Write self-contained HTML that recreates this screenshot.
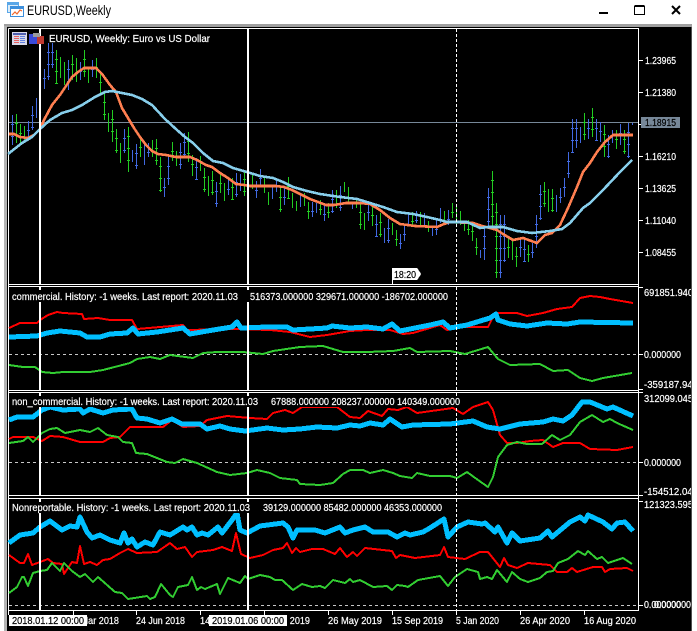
<!DOCTYPE html>
<html><head><meta charset="utf-8"><title>EURUSD,Weekly</title>
<style>
html,body{margin:0;padding:0;background:#fff;width:697px;height:631px;overflow:hidden}
svg{display:block}
text{font-family:"Liberation Sans",sans-serif;font-size:10px;fill:#fff;stroke:#fff;stroke-width:.2}
text.k{fill:#000;stroke:#000}
</style></head><body>
<svg width="697" height="631" viewBox="0 0 697 631" xmlns="http://www.w3.org/2000/svg">
<defs><clipPath id="c"><rect x="7" y="27" width="684" height="604"/></clipPath></defs>
<rect width="697" height="631" fill="#fff"/>
<rect x="4" y="24" width="688" height="607" fill="#a0a0a0"/>
<rect x="4" y="26" width="3" height="605" fill="#b4b4b4"/>
<rect x="7" y="27" width="684.5" height="604" fill="#000"/>

<!-- title bar -->
<g shape-rendering="crispEdges">
<rect x="7" y="2" width="12" height="11" fill="#5aa7e8"/><rect x="8" y="5" width="10" height="7" fill="#dcecf8"/>
<rect x="10" y="6" width="14" height="11" fill="#3d8fdc"/><rect x="11" y="9" width="12" height="7" fill="#fff"/>
</g>
<path d="M12 15l3-3 2 2 3-4 2 1" fill="none" stroke="#f0662a" stroke-width="1.2"/>
<text class="k" x="27" y="15" textLength="84" lengthAdjust="spacingAndGlyphs" style="font-size:14px;stroke-width:0">EURUSD,Weekly</text>
<g shape-rendering="crispEdges" fill="#000">
<rect x="599" y="12" width="9" height="2"/>
<path fill="none" stroke="#000" d="M634.500 6.500H644.500V14.500H634.500ZM634.500 5.500H644.500"/>
</g>
<path d="M672 6l8 8M680 6l-8 8" stroke="#000" stroke-width="2" fill="none"/>

<!-- frames -->
<g stroke="#fff" stroke-width="1" fill="none" shape-rendering="crispEdges">
<path d="M8.500 28.500H638.500V610.500M8.500 28.500V610.500"/>
<path d="M8 284.500H639M8 286.500H639M8 390.500H639M8 392.500H639M8 495.500H639M8 498.500H639M8 610.500H639"/>
<path d="M638 60.500h5M638 92.500h5M638 124.500h3M638 156.500h5M638 188.500h5M638 220.500h5M638 252.500h5M638 287.500h5M638 354.500h5M638 389.500h5M638 392.500h5M638 462.500h5M638 495.500h5M638 501.500h5M638 605.500h5"/>
<path d="M8.500 610v5M73.500 610v5M136.500 610v5M200.500 610v5M264.500 610v5M328.500 610v5M392.500 610v5M456.500 610v5M520.500 610v5M584.500 610v5"/>
</g>
<path d="M9 122.500H638" stroke="#778899" shape-rendering="crispEdges"/>
<g stroke="#c8c8c8" stroke-dasharray="3 3" shape-rendering="crispEdges">
<path d="M9 354.500H638M9 462.500H638M9 605.500H638"/>
</g>

<!-- bars -->
<g fill="none" shape-rendering="crispEdges">
<path id="bb" stroke="#4169e1" stroke-width="1" d="M12.500 115V145M28.500 121V137M32.500 106V130M36.500 98V118M44.500 69V89M48.500 43V80M52.500 43V68M68.500 60V90M80.500 62V80M92.500 60V77M124.500 129V153M132.500 150V162M136.500 144V169M144.500 145V165M148.500 143V157M164.500 178V197M168.500 157V185M180.500 143V169M184.500 133V157M196.500 158V180M216.500 182V207M228.500 180V195M236.500 173V197M240.500 174V191M256.500 181V198M260.500 169V185M272.500 187V199M276.500 180V192M284.500 188V205M300.500 195V207M312.500 202V217M316.500 203V213M324.500 205V221M332.500 190V213M340.500 186V211M352.500 202V209M368.500 203V221M376.500 215V237M384.500 228V243M388.500 219V243M400.500 234V249M404.500 225V241M408.500 212V225M416.500 211V223M424.500 213V226M432.500 227V236M436.500 220V235M440.500 208V223M448.500 210V225M480.500 250V258M484.500 227V260M488.500 188V228M500.500 215V278M504.500 215V262M520.500 238V257M524.500 240V262M532.500 243V258M536.500 215V248M540.500 185V220M556.500 195V212M560.500 188V203M564.500 178V197M568.500 152V178M572.500 119V153M576.500 119V148M580.500 127V143M588.500 119V139M596.500 119V141M600.500 122V142M608.500 135V158M612.500 130V143M620.500 124V145M628.500 123V158M632.500 123V125"/>
<path id="bg" stroke="#22cc22" stroke-width="1" d="M16.500 114V143M20.500 124V143M24.500 126V143M56.500 50V84M60.500 57V78M64.500 62V85M72.500 55V80M76.500 58V82M84.500 50V77M88.500 68V83M96.500 58V78M100.500 73V93M104.500 93V120M108.500 113V132M112.500 110V142M116.500 129V153M120.500 143V163M128.500 127V172M140.500 138V157M152.500 140V157M156.500 139V165M160.500 157V192M172.500 142V161M176.500 151V166M188.500 132V162M192.500 155V176M200.500 156V171M204.500 168V192M208.500 176V196M212.500 171V195M220.500 174V193M224.500 183V201M232.500 178V200M244.500 170V196M252.500 175V189M264.500 177V193M268.500 192V205M280.500 188V212M288.500 177V199M292.500 193V208M296.500 201V211M304.500 193V206M308.500 202V219M320.500 200V215M328.500 203V218M336.500 190V208M344.500 182V192M348.500 187V203M356.500 200V208M360.500 203V229M364.500 213V230M372.500 206V226M380.500 213V237M392.500 223V235M396.500 230V246M412.500 212V225M420.500 212V225M428.500 221V232M444.500 211V223M452.500 203V218M456.500 205V225M460.500 211V225M464.500 222V231M468.500 220V235M472.500 222V241M476.500 238V255M492.500 171V228M496.500 203V278M508.500 238V258M512.500 238V260M516.500 247V267M528.500 245V262M544.500 182V207M548.500 189V212M552.500 189V212M584.500 113V140M592.500 108V137M604.500 125V157M616.500 130V149M624.500 130V154"/>
<path stroke="#4169e1" stroke-width="3" stroke-dasharray="1 11" stroke-dashoffset="-9" d="M12.500 115V145M28.500 121V137M32.500 106V130M44.500 69V89M48.500 43V80M52.500 43V68M68.500 60V90M80.500 62V80M92.500 60V77M124.500 129V153M136.500 144V169M148.500 143V157M164.500 178V197M168.500 157V185M180.500 143V169M184.500 133V157M196.500 158V180M216.500 182V207M228.500 180V195M236.500 173V197M256.500 181V198M260.500 169V185M284.500 188V205M312.500 202V217M324.500 205V221M332.500 190V213M340.500 186V211M368.500 203V221M376.500 215V237M388.500 219V243M400.500 234V249M404.500 225V241M416.500 211V223M436.500 220V235M448.500 210V225M484.500 227V260M488.500 188V228M500.500 215V278M504.500 215V262M520.500 238V257M524.500 240V262M532.500 243V258M536.500 215V248M540.500 185V220M560.500 188V203M564.500 178V197M568.500 152V178M572.500 119V153M576.500 119V148M588.500 119V139M596.500 119V141M600.500 122V142M608.500 135V158M620.500 124V145M628.500 123V158"/>
<path stroke="#22cc22" stroke-width="3" stroke-dasharray="1 11" stroke-dashoffset="-9" d="M16.500 114V143M20.500 124V143M56.500 50V84M72.500 55V80M84.500 50V77M96.500 58V78M100.500 73V93M104.500 93V120M112.500 110V142M116.500 129V153M128.500 127V172M140.500 138V157M156.500 139V165M160.500 157V192M172.500 142V161M188.500 132V162M192.500 155V176M204.500 168V192M212.500 171V195M220.500 174V193M232.500 178V200M244.500 170V196M264.500 177V193M280.500 188V212M288.500 177V199M308.500 202V219M320.500 200V215M328.500 203V218M360.500 203V229M372.500 206V226M380.500 213V237M396.500 230V246M412.500 212V225M452.500 203V218M468.500 220V235M472.500 222V241M476.500 238V255M492.500 171V228M496.500 203V278M508.500 238V258M516.500 247V267M528.500 245V262M544.500 182V207M552.500 189V212M584.500 113V140M592.500 108V137M604.500 125V157M616.500 130V149M624.500 130V154"/>
</g>

<!-- moving averages -->
<g fill="none" stroke-width="2.600" stroke-linejoin="round" shape-rendering="crispEdges">
<polyline stroke="#ff7f50" points="9,134 14,134 20,137 28,138 34,135 40,129 44,120 52,105 60,95 68,83 72,77 78,72 84,68 92,68 96,68 102,74 110,85 116,92 122,108 128,118 134,128 140,137 146,145 152,151 158,154 166,155 176,157 190,157 197,160 206,165 212,167 220,173 228,178 236,184 244,185 250,186 276,186 284,187 292,190 300,194 310,199 318,202 326,205 334,205 340,204 346,203 360,203 370,204 380,210 390,218 400,224 415,226 437,227 444,224 450,222 473,223 482,226 490,228 497,230 503,234 513,240 523,238 537,243 545,235 552,233 560,225 568,208 577,187 583,172 590,163 597,152 605,142 613,135 633,135"/>
<polyline stroke="#87ceeb" points="8,154 22,143 32,137 40,129 50,120 62,113 72,110 82,105 95,97 105,92 112,91 122,93 132,95 142,99 152,105 165,119 177,130 185,137 193,143 203,153 213,161 223,163 233,168 247,172 260,176 273,178 283,182 293,187 307,191 320,194 340,197 357,199 370,203 383,207 397,212 413,214 427,217 440,220 447,222 467,222 480,228 488,227 503,227 517,231 532,233 550,231 562,229 570,223 583,208 590,203 603,190 620,172 632,160"/>
</g>

<!-- panel 2 -->
<g fill="none" stroke-linejoin="round" shape-rendering="crispEdges">
<polyline stroke="#f00" stroke-width="2" points="9,328 20,323 37,323 40,320 48,315 57,312 63,313 82,314 84,319 98,318 110,320 132,320 137,329 160,327 183,325 187,330 233,329 270,330 290,332 310,337 327,335 350,331 367,330 390,330 403,334 413,333 440,325 447,330 463,327 488,327 495,313 517,313 527,316 543,313 557,309 572,307 580,298 590,296 600,297 610,299 633,303"/>
<polyline stroke="#32cd32" stroke-width="2" points="9,365 23,367 35,367 42,372 53,373 63,372 90,372 103,370 130,363 137,359 150,357 160,359 170,355 193,358 203,353 217,352 243,352 263,354 273,351 300,347 323,346 343,352 367,352 393,351 410,348 417,352 450,351 465,354 488,347 498,359 510,365 540,364 553,371 568,370 580,378 592,381 603,378 632,373"/>
<polyline stroke="#00bfff" stroke-width="5" points="9,337 37,336 47,333 60,331 80,333 87,337 100,337 110,334 127,333 133,328 138,334 157,332 183,328 190,334 213,330 232,327 237,322 241,328 267,327 287,327 293,330 327,328 332,326 350,328 367,327 383,329 392,324 400,331 430,325 443,322 450,328 467,325 490,318 496,314 498,320 510,324 527,326 547,323 567,324 580,322 633,323"/>
</g>

<!-- panel 3 -->
<g fill="none" stroke-linejoin="round" shape-rendering="crispEdges">
<polyline stroke="#f00" stroke-width="2" points="9,439 13,437 20,437 33,437 42,441 50,436 63,437 80,442 103,442 110,438 120,437 130,427 157,427 163,427 172,420 183,427 200,426 207,420 227,416 250,418 267,419 273,413 285,410 293,413 302,407 337,407 350,417 360,418 368,411 382,416 388,409 398,410 407,407 417,413 453,408 463,414 473,407 488,402 493,410 500,435 507,443 517,443 530,441 543,440 553,447 563,443 580,443 590,449 617,450 633,447"/>
<polyline stroke="#32cd32" stroke-width="2" points="9,443 23,441 28,437 33,442 42,433 50,429 57,428 65,433 80,430 90,432 98,428 107,435 118,437 123,442 132,443 136,453 147,454 167,462 175,463 183,459 197,463 217,472 230,475 247,473 257,470 270,473 280,478 297,480 300,484 320,485 333,483 343,474 350,470 363,470 370,473 383,470 393,473 400,476 412,478 417,473 430,476 450,476 457,478 467,472 478,480 488,487 493,477 498,457 507,445 517,442 527,444 542,444 552,435 560,440 570,435 580,422 592,415 603,422 610,419 617,423 633,430"/>
<polyline stroke="#00bfff" stroke-width="5" points="9,420 17,417 33,417 42,410 50,407 63,410 80,409 83,413 90,409 103,413 113,410 132,409 137,418 147,419 160,423 172,419 182,424 200,424 207,429 220,426 230,429 245,431 267,428 283,430 300,429 317,427 337,428 350,425 360,426 370,423 383,425 390,419 402,427 413,425 450,424 473,421 487,427 500,429 520,424 543,422 553,419 563,421 572,415 582,402 590,402 607,409 613,407 633,416"/>
</g>

<!-- panel 4 -->
<g fill="none" stroke-linejoin="round" shape-rendering="crispEdges">
<polyline stroke="#f00" stroke-width="2" points="9,555 20,563 24,563 28,554 32,565 40,562 48,559 53,563 62,564 64,574 72,562 77,563 80,546 84,564 90,562 97,565 103,560 110,559 120,553 128,549 137,553 157,552 170,543 177,549 185,547 192,557 197,552 213,550 222,547 232,551 236,533 241,554 250,558 263,555 273,550 283,548 287,543 292,553 296,548 300,552 312,549 323,549 335,554 340,548 347,557 353,552 357,556 365,548 392,551 396,558 400,555 415,558 440,555 444,547 448,557 465,559 480,552 488,552 500,567 504,558 508,565 517,568 528,563 550,565 557,572 567,572 572,568 577,572 593,567 602,567 605,572 610,569 627,568 633,571"/>
<polyline stroke="#32cd32" stroke-width="2" points="9,593 17,587 22,577 24,577 28,586 33,573 40,571 47,570 52,563 60,571 64,563 72,571 80,577 85,574 93,582 98,577 115,592 122,593 128,599 147,596 150,599 155,597 161,584 170,595 173,597 178,587 188,585 192,577 197,590 201,587 205,589 217,584 220,594 228,578 240,583 245,576 248,579 260,575 270,577 275,580 282,580 293,590 302,584 312,587 320,586 325,588 333,580 345,583 350,579 353,582 360,580 373,587 387,586 392,590 397,585 405,586 408,587 418,580 440,576 448,586 455,577 467,569 478,572 480,579 487,577 492,579 497,570 507,582 512,572 520,579 528,582 540,578 547,572 553,571 558,563 568,559 578,551 585,555 588,551 597,559 602,557 608,563 623,558 632,564"/>
<polyline stroke="#00bfff" stroke-width="5" points="9,543 20,535 33,533 40,527 50,521 62,530 70,526 77,527 80,517 87,532 92,538 100,535 110,540 120,543 124,533 128,543 132,539 137,547 145,542 153,545 160,532 170,535 183,527 187,530 192,527 197,535 202,533 208,535 218,527 222,533 232,520 237,513 240,530 247,533 260,526 283,523 288,527 293,538 297,530 315,530 325,533 340,527 345,533 353,530 365,527 373,532 388,532 397,537 405,533 410,535 423,532 430,528 444,519 448,537 457,527 468,522 482,524 485,523 495,532 498,527 507,543 512,533 520,541 540,538 548,531 552,537 570,522 580,517 585,521 588,515 603,522 612,529 617,523 625,522 633,531"/>
</g>

<!-- period separators -->
<g stroke="#fff" shape-rendering="crispEdges">
<path stroke-width="2" d="M40 29V284M248 29V284M40 287V390M248 287V390M40 393V495M248 393V495M40 499V610M248 499V610"/>
<path stroke-width="1" stroke-dasharray="3 2" d="M456.500 29V284M456.500 287V390M456.500 393V495M456.500 499V610"/>
</g>

<!-- indicator text strips -->
<g fill="#000" shape-rendering="crispEdges">
<rect x="9" y="290" width="439" height="12"/>
<rect x="9" y="396" width="451" height="11"/>
<rect x="9" y="502" width="433" height="11"/>
</g>

<!-- chart title and mini icons -->
<g shape-rendering="crispEdges">
<rect x="12" y="32" width="15" height="13" fill="#d8d8e8"/>
<rect x="13" y="33" width="13" height="2" fill="#5060b0"/>
<path d="M14 36.500h5M14 38.500h5M14 40.500h5M14 42.500h5" stroke="#e86060"/>
<path d="M20 36.500h5M20 38.500h5M20 40.500h5M20 42.500h5" stroke="#6080e0"/>
<rect x="29" y="34" width="8" height="10" fill="#3a4ad8"/>
<rect x="37" y="36" width="7" height="8" fill="#c03a30"/>
<rect x="33" y="33" width="7" height="4" fill="#9a9a9a"/>
</g>
<text x="49" y="42" textLength="161" lengthAdjust="spacingAndGlyphs">EURUSD, Weekly:  Euro vs US Dollar</text>

<text x="12" y="300" textLength="226" lengthAdjust="spacingAndGlyphs">commercial. History: -1 weeks. Last report: 2020.11.03</text>
<text x="250" y="300" textLength="198" lengthAdjust="spacingAndGlyphs">516373.000000 329671.000000 -186702.000000</text>
<text x="12" y="405" textLength="246" lengthAdjust="spacingAndGlyphs">non_commercial. History: -1 weeks. Last report: 2020.11.03</text>
<text x="271" y="405" textLength="189" lengthAdjust="spacingAndGlyphs">67888.000000 208237.000000 140349.000000</text>
<text x="12" y="511" textLength="238" lengthAdjust="spacingAndGlyphs">Nonreportable. History: -1 weeks. Last report: 2020.11.03</text>
<text x="263" y="511" textLength="179" lengthAdjust="spacingAndGlyphs">39129.000000 85482.000000 46353.000000</text>

<!-- price labels -->
<rect x="641" y="117" width="39" height="11" fill="#778899" shape-rendering="crispEdges"/>
<g clip-path="url(#c)">
<text x="645" y="64" textLength="31" lengthAdjust="spacingAndGlyphs">1.23965</text>
<text x="645" y="96" textLength="31" lengthAdjust="spacingAndGlyphs">1.21380</text>
<text class="k" x="645" y="126" textLength="31" lengthAdjust="spacingAndGlyphs">1.18915</text>
<text x="645" y="160" textLength="31" lengthAdjust="spacingAndGlyphs">1.16210</text>
<text x="645" y="192" textLength="31" lengthAdjust="spacingAndGlyphs">1.13625</text>
<text x="645" y="224" textLength="31" lengthAdjust="spacingAndGlyphs">1.11040</text>
<text x="645" y="256" textLength="31" lengthAdjust="spacingAndGlyphs">1.08455</text>
<text x="644" y="296" textLength="49" lengthAdjust="spacingAndGlyphs">691851.940</text>
<text x="644" y="358" textLength="37" lengthAdjust="spacingAndGlyphs">0.000000</text>
<text x="644" y="388" textLength="54" lengthAdjust="spacingAndGlyphs">-359187.940</text>
<text x="644" y="402" textLength="49" lengthAdjust="spacingAndGlyphs">312099.045</text>
<text x="644" y="466" textLength="37" lengthAdjust="spacingAndGlyphs">0.000000</text>
<text x="644" y="495" textLength="54" lengthAdjust="spacingAndGlyphs">-154512.045</text>
<text x="644" y="508" textLength="49" lengthAdjust="spacingAndGlyphs">121323.595</text>
<text x="644" y="608" textLength="37" lengthAdjust="spacingAndGlyphs">0.000000</text>
<text x="654" y="608" textLength="37" lengthAdjust="spacingAndGlyphs">0.000000</text>
</g>

<!-- 18:20 flag -->
<path d="M392.500 284V268.500H417L420.500 274L417 279.500H392.500Z" fill="#fff" stroke="#fff" stroke-width="1" shape-rendering="crispEdges"/>
<text class="k" x="394" y="278" textLength="22" lengthAdjust="spacingAndGlyphs">18:20</text>

<!-- time axis -->
<text x="73" y="624" textLength="46" lengthAdjust="spacingAndGlyphs">4 Mar 2018</text>
<text x="136" y="624" textLength="49" lengthAdjust="spacingAndGlyphs">24 Jun 2018</text>
<text x="200" y="624" textLength="50" lengthAdjust="spacingAndGlyphs">14 Oct 2018</text>
<text x="264" y="624" textLength="46" lengthAdjust="spacingAndGlyphs">3 Feb 2019</text>
<text x="328" y="624" textLength="54" lengthAdjust="spacingAndGlyphs">26 May 2019</text>
<text x="392" y="624" textLength="51" lengthAdjust="spacingAndGlyphs">15 Sep 2019</text>
<text x="456" y="624" textLength="43" lengthAdjust="spacingAndGlyphs">5 Jan 2020</text>
<text x="520" y="624" textLength="50" lengthAdjust="spacingAndGlyphs">26 Apr 2020</text>
<text x="584" y="624" textLength="52" lengthAdjust="spacingAndGlyphs">16 Aug 2020</text>
<rect x="9" y="615" width="78" height="11" fill="#fff" shape-rendering="crispEdges"/>
<rect x="209" y="615" width="78" height="11" fill="#fff" shape-rendering="crispEdges"/>
<text class="k" x="12" y="624" textLength="72" lengthAdjust="spacingAndGlyphs">2018.01.12 00:00</text>
<text class="k" x="212" y="624" textLength="72" lengthAdjust="spacingAndGlyphs">2019.01.06 00:00</text>
</svg>
</body></html>
